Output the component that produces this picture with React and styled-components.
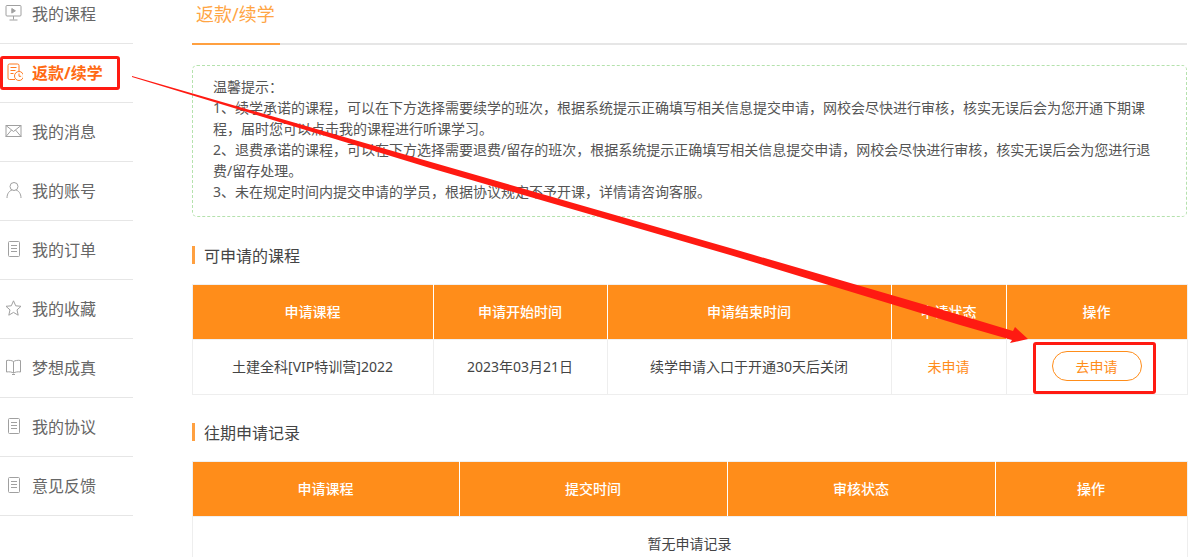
import React from 'react'
import styled, { createGlobalStyle } from 'styled-components'

const GlobalStyle = createGlobalStyle`
  html, body {
    margin: 0;
    padding: 0;
    background: #fff;
    overflow: hidden;
  }
  body {
    font-family: "Noto Sans", "Noto Sans CJK SC", sans-serif;
    font-size: 14px;
    color: #555;
  }
`

const Page = styled.div`
  position: relative;
  display: flex;
  gap: 59px;
  width: 1190px;
  height: 557px;
  overflow: hidden;
`

const Sidebar = styled.ul`
  flex: none;
  width: 133px;
  margin: -15px 0 0;
  padding: 0;
  list-style: none;
`

const NavItem = styled.li`
  display: flex;
  align-items: center;
  gap: 9px;
  height: 56px;
  padding: 0 0 2px 5px;
  border-bottom: 1px solid #e6e6e6;
  font-size: 16px;
  font-weight: ${(p) => (p.$active ? 700 : 400)};
  color: ${(p) => (p.$active ? '#ff6a13' : '#666')};
`

const NavIcon = styled.svg`
  flex: none;
  width: 18px;
  height: 18px;
  fill: none;
  stroke: ${(p) => (p.$active ? '#ff7a1f' : '#a0a0a0')};
  stroke-width: 1;
`

const Main = styled.main`
  flex: none;
  width: 995px;
`

const TabBar = styled.div`
  height: 43px;
  border-bottom: 2px solid #e6e6e6;
`

const Tab = styled.div`
  box-sizing: border-box;
  width: 88px;
  height: 45px;
  padding: 1px 0 0 4px;
  border-bottom: 2px solid #ffa040;
  font-size: 18px;
  line-height: 26px;
  color: #ffa544;
`

const Notice = styled.div`
  margin-top: 20px;
  padding: 10px 30px 14px 20px;
  border: 1px dashed #b5e2ad;
  border-radius: 5px;
  font-size: 14px;
  line-height: 21px;
  color: #555;
`

const SectionTitle = styled.h3`
  display: flex;
  align-items: center;
  height: 18px;
  margin: ${(p) => p.$top}px 0 20px;
  padding-left: 9px;
  border-left: 3px solid #ffa040;
  font-size: 16px;
  font-weight: 400;
  color: #444;
`

const Table = styled.table`
  width: 995px;
  table-layout: fixed;
  border-collapse: collapse;
  text-align: center;
  font-size: 14px;
`

const HeadCell = styled.th`
  height: 52px;
  padding: 0 1px 2px 0;
  border: 1px solid #f0f0f0;
  border-color: #f0f0f0 #fff;
  background: #ff8d1a;
  font-weight: 500;
  color: #fff;
  &:first-child { border-left-color: #f0f0f0; }
  &:last-child { border-right-color: #f0f0f0; }
`

const Cell = styled.td`
  height: 52px;
  padding: 0 1px 2px 0;
  border: 1px solid #eee;
  color: ${(p) => (p.$accent ? '#ff8d1a' : '#444')};
`

const ApplyButton = styled.button`
  display: block;
  width: 90px;
  height: 30px;
  margin: 0 auto;
  padding: 0;
  border: 1px solid #ff8d1a;
  border-radius: 15px;
  background: #fff;
  font: inherit;
  color: #ff8d1a;
`

const RedFrame = styled.div`
  position: absolute;
  box-sizing: border-box;
  left: ${(p) => p.$x}px;
  top: ${(p) => p.$y}px;
  width: ${(p) => p.$w}px;
  height: ${(p) => p.$h}px;
  border: 3px solid #ff1a12;
  border-radius: 3px;
`

const Arrow = styled.svg`
  position: absolute;
  left: 0;
  top: 0;
  width: 1190px;
  height: 557px;
  pointer-events: none;
`

const DocLines = (
  <>
    <rect x="3.5" y="1.5" width="11" height="15" rx="1" />
    <path d="M6 5.500h6M6 8.500h6M6 11.500h6" />
  </>
)

const navItems = [
  {
    label: '我的课程',
    icon: (
      <>
        <rect x="1" y="1.500" width="15" height="10.500" rx="1" />
        <path d="M8.500 12v3.500M4.500 16h8" />
        <path d="M6.800 4.500l3.600 2.300-3.600 2.300z" fill="#a0a0a0" />
      </>
    ),
  },
  {
    label: '返款/续学',
    active: true,
    icon: (
      <>
        <path d="M10 16.500H4.500A1.500 1.500 0 0 1 3 15V2.500A1.500 1.500 0 0 1 4.500 1h8A1.500 1.500 0 0 1 14 2.500V8" />
        <path d="M5.500 4.500h6M5.500 7.500h5M5.500 10.500h3" />
        <circle cx="14" cy="13" r="4.500" />
        <path d="M14 10.500v2.800h2.200" />
      </>
    ),
  },
  {
    label: '我的消息',
    icon: (
      <>
        <rect x="1" y="3.500" width="15" height="11" />
        <path d="M1 3.500l7.500 6 7.500-6M1 14.500l5.500-6.500M16 14.500l-5.500-6.500" />
      </>
    ),
  },
  {
    label: '我的账号',
    icon: (
      <>
        <circle cx="9" cy="5.500" r="4" />
        <path d="M2 17c0-4.500 2.500-7.500 5.200-8M16 17c0-4.500-2.500-7.500-5.200-8" />
      </>
    ),
  },
  { label: '我的订单', icon: DocLines },
  {
    label: '我的收藏',
    icon: <path d="M8.500 1.800l2.200 5 5.300.5-4 3.600 1.200 5.300-4.700-2.800-4.700 2.800 1.200-5.300-4-3.600 5.300-.5z" />,
  },
  {
    label: '梦想成真',
    icon: (
      <path d="M8.500 3.500C7 2.500 4 2 1.500 2.500v11.500C4 13.500 7 14 8.500 15c1.500-1 4.500-1.500 7-1v-11.500C13 2 10 2.500 8.500 3.500zM8.500 3.500V15M7 16.500h3" />
    ),
  },
  { label: '我的协议', icon: DocLines },
  { label: '意见反馈', icon: DocLines },
]

const openColumns = [241, 174, 284, 115, 181]
const historyColumns = [267, 268, 268, 192]

const Columns = ({ widths }) => (
  <colgroup>
    {widths.map((w, i) => (
      <col key={i} width={w} />
    ))}
  </colgroup>
)

export default function App() {
  return (
    <Page>
      <GlobalStyle />
      <Sidebar>
        {navItems.map((item) => (
          <NavItem key={item.label} $active={item.active}>
            <NavIcon viewBox="0 0 18 18" $active={item.active}>
              {item.icon}
            </NavIcon>
            {item.label}
          </NavItem>
        ))}
      </Sidebar>

      <Main>
        <TabBar>
          <Tab>返款/续学</Tab>
        </TabBar>

        <Notice>
          温馨提示：
          <br />
          1、续学承诺的课程，可以在下方选择需要续学的班次，根据系统提示正确填写相关信息提交申请，网校会尽快进行审核，核实无误后会为您开通下期课程，届时您可以点击我的课程进行听课学习。
          <br />
          2、退费承诺的课程，可以在下方选择需要退费/留存的班次，根据系统提示正确填写相关信息提交申请，网校会尽快进行审核，核实无误后会为您进行退费/留存处理。
          <br />
          3、未在规定时间内提交申请的学员，根据协议规定不予开课，详情请咨询客服。
        </Notice>

        <SectionTitle $top={29}>可申请的课程</SectionTitle>
        <Table>
          <Columns widths={openColumns} />
          <thead>
            <tr>
              <HeadCell>申请课程</HeadCell>
              <HeadCell>申请开始时间</HeadCell>
              <HeadCell>申请结束时间</HeadCell>
              <HeadCell>申请状态</HeadCell>
              <HeadCell>操作</HeadCell>
            </tr>
          </thead>
          <tbody>
            <tr>
              <Cell>土建全科[VIP特训营]2022</Cell>
              <Cell>2023年03月21日</Cell>
              <Cell>续学申请入口于开通30天后关闭</Cell>
              <Cell $accent>未申请</Cell>
              <Cell>
                <ApplyButton>去申请</ApplyButton>
              </Cell>
            </tr>
          </tbody>
        </Table>

        <SectionTitle $top={28}>往期申请记录</SectionTitle>
        <Table>
          <Columns widths={historyColumns} />
          <thead>
            <tr>
              <HeadCell>申请课程</HeadCell>
              <HeadCell>提交时间</HeadCell>
              <HeadCell>审核状态</HeadCell>
              <HeadCell>操作</HeadCell>
            </tr>
          </thead>
          <tbody>
            <tr>
              <Cell colSpan={4}>暂无申请记录</Cell>
            </tr>
          </tbody>
        </Table>
      </Main>

      <RedFrame $x={0} $y={56} $w={120} $h={34} />
      <RedFrame $x={1033} $y={342} $w={123} $h={52} />
      <Arrow viewBox="0 0 1190 557">
        <polygon
          points="132,76 430,161.700 730,248 960,315 1013,331 1015,327 1028,339 1010,343 1012,340 960,325 730,255 430,168 132,77"
          fill="#ff1a12"
        />
      </Arrow>
    </Page>
  )
}
